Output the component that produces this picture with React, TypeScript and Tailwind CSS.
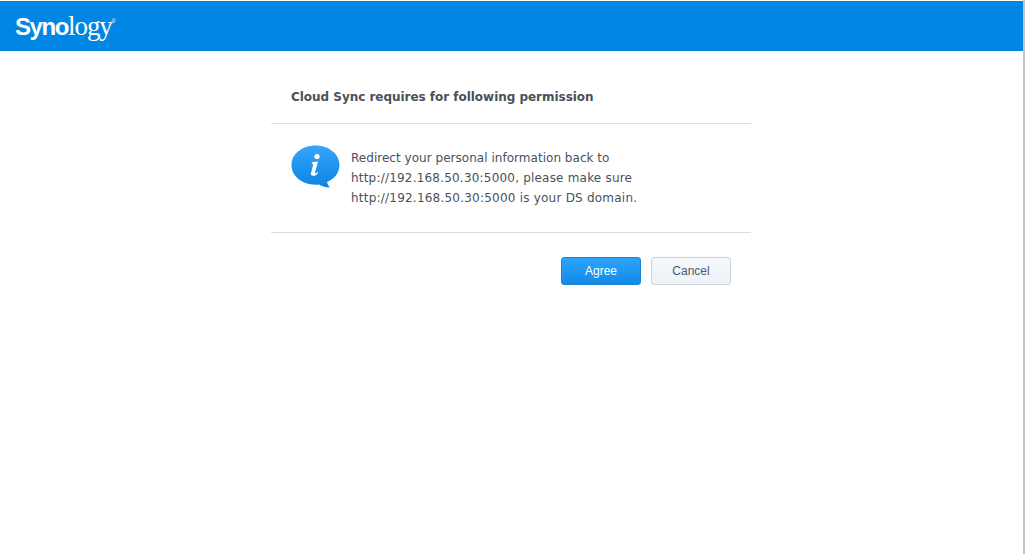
export default function App() {
  return (
    <div className="flex h-[554px] w-[1025px] overflow-hidden bg-white">
      <div className="flex min-w-0 flex-1 flex-col">
        <header className="mt-px flex h-[50px] items-center bg-[#0086e5] pl-[15px]">
          <div className="flex items-baseline text-white">
            <span className="font-['Liberation_Sans',sans-serif] text-[24px] font-bold tracking-[-1.4px]">Syno</span>
            <span className="font-['Liberation_Serif',serif] text-[27px] tracking-[-1.1px]">logy</span>
            <span className="relative -top-[12px] font-['Liberation_Sans',sans-serif] text-[5px]">®</span>
          </div>
        </header>
        <main className="ml-[271px] mt-[25px] w-[480px]">
          <div className="flex h-[48px] items-center border-b border-[#d7e0e7] px-5 pb-[6px]">
            <h1 className="font-['DejaVu_Sans',sans-serif] text-[12px] font-bold tracking-[-0.03px] text-[#4a505a]">Cloud Sync requires for following permission</h1>
          </div>
          <div className="flex h-[109px] items-start border-b border-[#d7e0e7] pl-5 pt-[21px]">
            <svg width="49" height="43" viewBox="0 0 49 43" className="shrink-0">
              <defs>
                <linearGradient id="bubble" x1="0" y1="0" x2="0" y2="1">
                  <stop offset="0" stopColor="#35a6fb" />
                  <stop offset="1" stopColor="#0b84e2" />
                </linearGradient>
              </defs>
              <path d="M24.5 0.5C38 0.5 48.5 9 48.5 20C48.5 28 43 34 36 37C36.5 39 37.5 41 39 42.5C35 42.5 31 41 28 39.4C26.8 39.6 25.6 39.7 24.5 39.7C11 39.7 0.5 31 0.5 20C0.5 9 11 0.5 24.5 0.5Z" fill="url(#bubble)" />
              <circle cx="26" cy="11.5" r="2.6" fill="#fff" />
              <path d="M20.8 17.2L27 16.4L24.2 27C23.9 28.2 24.5 28.6 25.3 28L26.4 27.1L27 27.9C25.6 29.8 23.9 30.8 22 30.8C20.2 30.8 19.5 29.7 20 28L22 20.6C22.3 19.4 21.8 18.9 20.7 18.6Z" fill="#fff" />
            </svg>
            <p className="ml-[11px] mt-[3px] font-['DejaVu_Sans',sans-serif] text-[12px] leading-[20px] text-[#4a505a]">
              <span className="tracking-[0.03px]">Redirect your personal information back to</span><br />
              <span className="tracking-[0.2px]">http://192.168.50.30:5000, please make sure</span><br />
              <span className="tracking-[0.22px]">http://192.168.50.30:5000 is your DS domain.</span>
            </p>
          </div>
          <div className="flex justify-end gap-[10px] pr-5 pt-6">
            <button className="h-7 w-20 rounded-[3px] border border-[#1a84d8] bg-gradient-to-b from-[#2ca4fb] to-[#118ae6] font-['Liberation_Sans',sans-serif] text-[12px] text-white">Agree</button>
            <button className="h-7 w-20 rounded-[3px] border border-[#c8d3de] bg-gradient-to-b from-[#f6f9fc] to-[#edf2f7] font-['Liberation_Sans',sans-serif] text-[12px] text-[#4a5a71]">Cancel</button>
          </div>
        </main>
      </div>
      <div className="w-[2px] shrink-0 bg-[#c4c4c4]" />
    </div>
  );
}
